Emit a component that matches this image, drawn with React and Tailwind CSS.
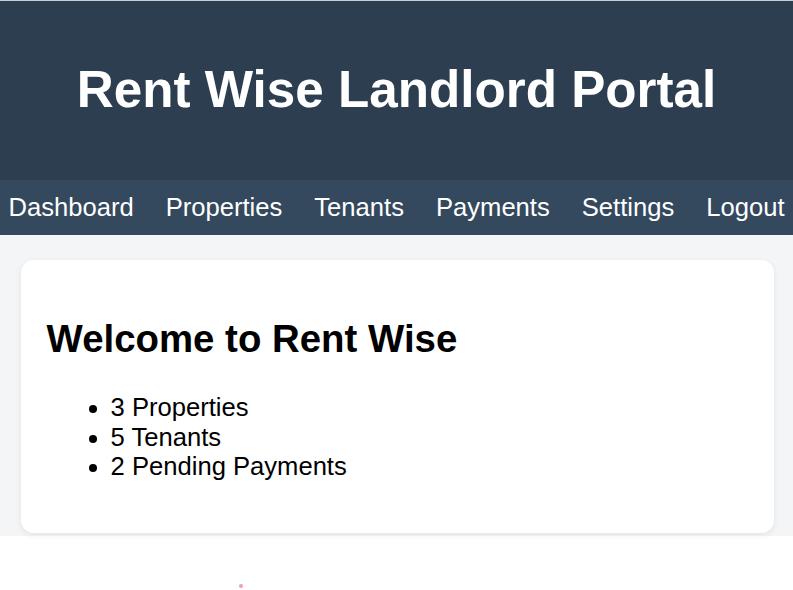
export default function App() {
  return (
    <div className="min-h-[590px] bg-white font-['Liberation_Sans',Arial,sans-serif] relative">
      <div className="h-px bg-[#c9ced4]" />
      <header className="bg-[#2c3e50] text-white text-center py-[25.6px]">
        <h1 className="text-[51.2px] leading-[1.149] font-bold my-[34.3px]">Rent Wise Landlord Portal</h1>
      </header>
      <nav className="bg-[#34495e] text-white text-[25.6px] leading-[1.149] pt-[13.5px] pb-[12.1px] flex justify-center gap-[32px]">
        <span>Dashboard</span>
        <span>Properties</span>
        <span>Tenants</span>
        <span>Payments</span>
        <span>Settings</span>
        <span>Logout</span>
      </nav>
      <main className="bg-[#f4f5f7] pt-[25px] pb-[3px] pl-[21px] pr-[19px]">
        <section className="bg-white rounded-[12.8px] shadow-[0_2px_6px_rgba(0,0,0,0.08)] p-[25.6px] text-black">
          <h2 className="text-[38.4px] leading-[1.149] font-bold mt-[31.9px] mb-[31.9px]">Welcome to Rent Wise</h2>
          <ul className="list-disc pl-[64px] text-[25.6px] leading-[1.149] mb-[25.6px]">
            <li>3 Properties</li>
            <li>5 Tenants</li>
            <li>2 Pending Payments</li>
          </ul>
        </section>
      </main>
      <div className="absolute left-[239px] top-[584px] w-[4px] h-[4px] rounded-full bg-[#f0a0aa]" />
    </div>
  );
}
